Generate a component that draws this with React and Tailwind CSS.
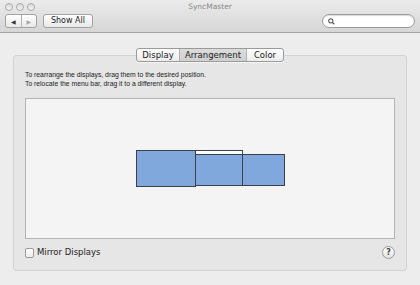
import React from 'react';

const Light = () => (
  <div className="w-[8px] h-[8px] rounded-full border border-[#a9a9a9] bg-gradient-to-b from-[#d9d9d9] to-[#f4f4f4]" />
);

export default function App() {
  return (
    <div className="w-[420px] h-[285px] bg-[#ededed] overflow-hidden flex flex-col font-['DejaVu_Sans',sans-serif]">
      {/* Title + toolbar */}
      <div className="h-[33px] bg-gradient-to-b from-[#ebebeb] to-[#d6d6d6] border-b border-[#a5a5a5] flex flex-col">
        <div className="relative h-[13px] flex items-center pl-[5px] gap-[3px] pt-[1px]">
          <Light />
          <Light />
          <Light />
          <div className="absolute inset-x-0 top-[2px] text-center text-[7.5px] leading-[10px] text-[#8a8a8a]">SyncMaster</div>
        </div>
        <div className="flex items-center pl-[5px] pr-[5px] mt-[1px]">
          <div className="flex h-[14px] w-[32px] rounded-[3px] border border-[#a2a2a2] bg-gradient-to-b from-[#ffffff] to-[#e8e8e8] overflow-hidden">
            <div className="flex-1 flex items-center justify-center border-r border-[#b5b5b5] text-[6px] text-[#333]">◀</div>
            <div className="flex-1 flex items-center justify-center text-[6px] text-[#aaa]">▶</div>
          </div>
          <div className="ml-[6px] h-[14px] w-[50px] rounded-[3px] border border-[#a2a2a2] bg-gradient-to-b from-[#ffffff] to-[#e8e8e8] flex items-center justify-center text-[8px] text-[#222]">
            Show All
          </div>
          <div className="ml-auto h-[14px] w-[93px] rounded-full border border-[#9c9c9c] bg-white flex items-center pl-[5px] shadow-[inset_0_1px_1px_rgba(0,0,0,0.15)]">
            <svg width="7" height="7" viewBox="0 0 10 10">
              <circle cx="4" cy="4" r="3" fill="none" stroke="#555" strokeWidth="1.5" />
              <path d="M6.2 6.2 L9 9" stroke="#555" strokeWidth="1.8" />
            </svg>
          </div>
        </div>
      </div>

      {/* Body */}
      <div className="flex-1 px-[13px] pt-[22px]">
        <div className="h-[216px] rounded-[3px] border border-[#d2d2d2] bg-[#e6e6e6] px-[11px] flex flex-col">
          <div className="-mt-[8px] flex justify-center">
            <div className="flex h-[14px] rounded-[3px] border border-[#9a9a9a] overflow-hidden text-[8.5px] text-[#222] bg-gradient-to-b from-[#ffffff] to-[#ececec] shadow-[0_1px_0_rgba(255,255,255,0.6)]">
              <div className="w-[43px] flex items-center justify-center border-r border-[#b0b0b0]">Display</div>
              <div className="w-[67px] flex items-center justify-center border-r border-[#b0b0b0] bg-gradient-to-b from-[#dcdcdc] to-[#cfcfcf]">Arrangement</div>
              <div className="flex-1 w-[36px] flex items-center justify-center">Color</div>
            </div>
          </div>
          <div className="mt-[8px] text-[6.8px] leading-[9px] text-[#222] font-['Liberation_Sans',sans-serif]">
            <div>To rearrange the displays, drag them to the desired position.</div>
            <div>To relocate the menu bar, drag it to a different display.</div>
          </div>
          <div className="mt-[10px] h-[141px] border border-[#b4b4b4] bg-[#f4f4f4] relative">
            <div className="absolute left-[110px] top-[51px] w-[60px] h-[37px] bg-[#80a8dd] border border-[#3a3f4a]" />
            <div className="absolute left-[169px] top-[51px] w-[48px] h-[5px] bg-white border border-[#3a3f4a] border-b-0" />
            <div className="absolute left-[169px] top-[55px] w-[48px] h-[32px] bg-[#80a8dd] border border-[#3a3f4a]" />
            <div className="absolute left-[216px] top-[55px] w-[43px] h-[32px] bg-[#80a8dd] border border-[#3a3f4a]" />
          </div>
          <div className="mt-[7px] flex items-center">
            <div className="w-[9px] h-[10px] rounded-[2px] border border-[#9a9a9a] bg-gradient-to-b from-white to-[#ececec]" />
            <span className="ml-[3px] text-[8.5px] text-[#222]">Mirror Displays</span>
            <div className="ml-auto w-[13px] h-[13px] rounded-full border border-[#9a9a9a] bg-gradient-to-b from-white to-[#e4e4e4] flex items-center justify-center text-[8px] font-bold text-[#444] leading-none">?</div>
          </div>
        </div>
      </div>
    </div>
  );
}
